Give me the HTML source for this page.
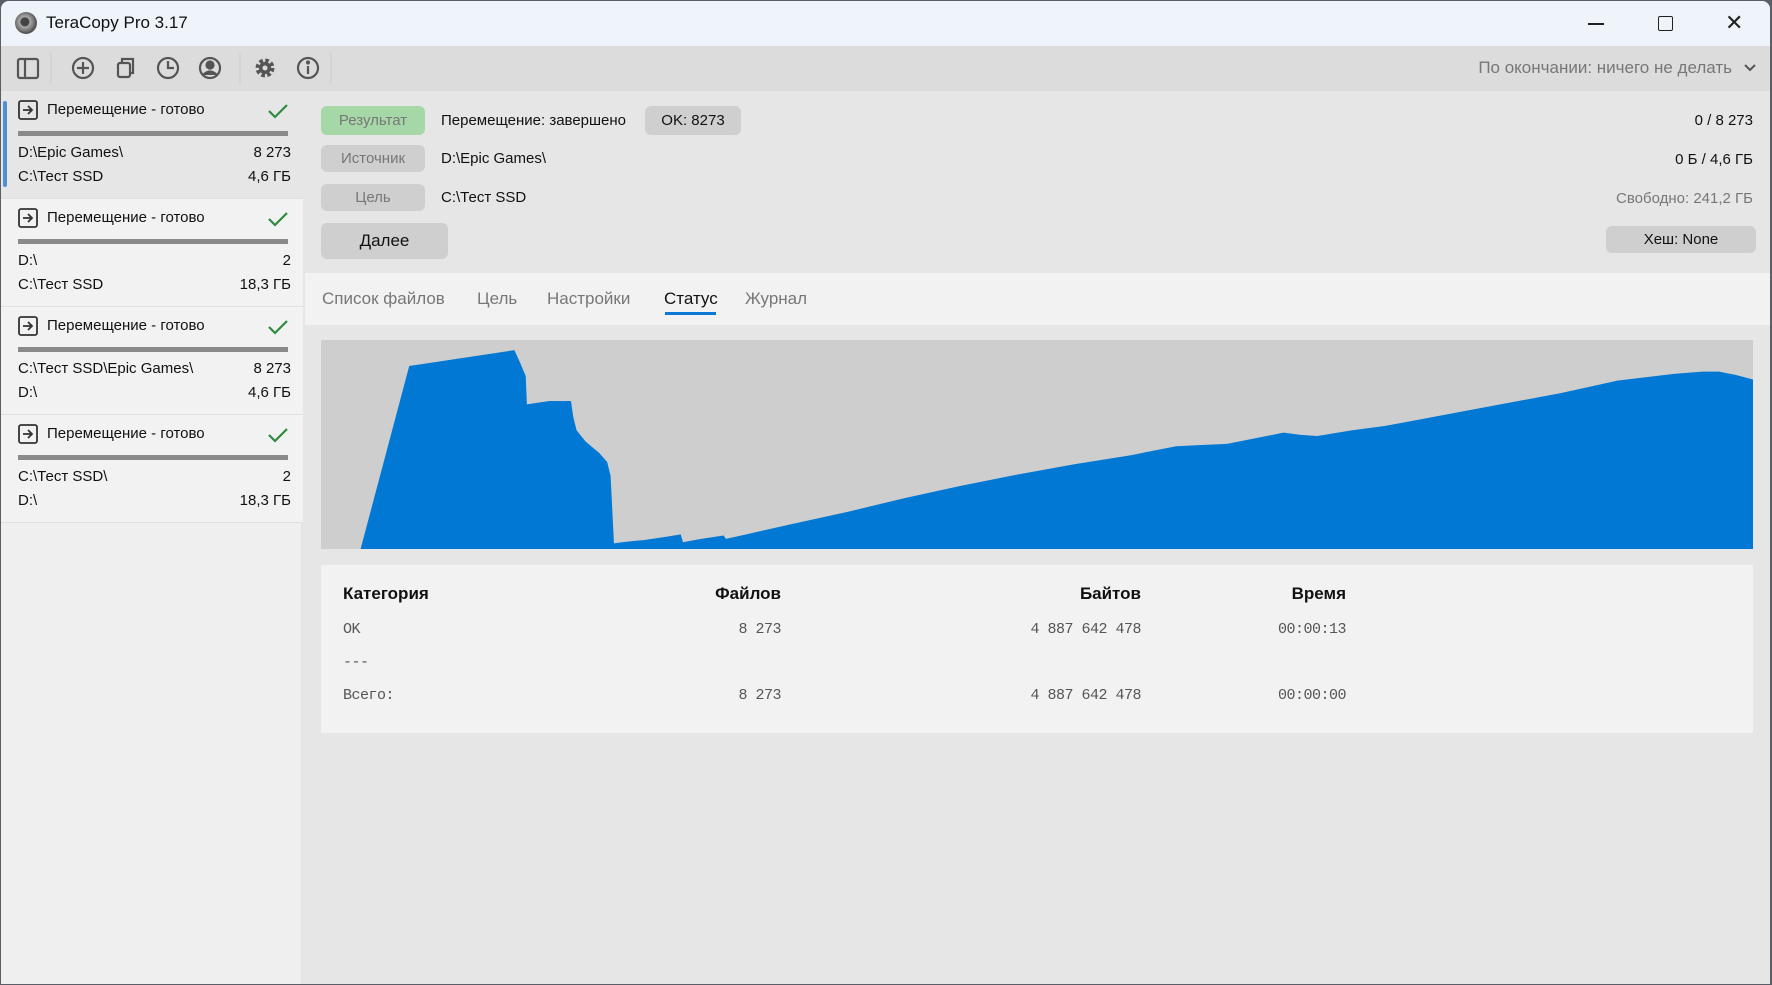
<!DOCTYPE html>
<html><head><meta charset="utf-8"><style>
*{box-sizing:border-box;margin:0;padding:0}
body{width:1772px;height:985px;overflow:hidden;background:#5a5f66;font-family:"Liberation Sans","Noto Sans CJK SC",sans-serif;position:relative}
.win{position:absolute;left:1px;top:1px;width:1769px;height:983px;background:#e6e6e6;border-radius:8px 8px 0 0;overflow:hidden}
.abs{position:absolute}
.title{left:0;top:0;width:100%;height:45px;background:#eff3fa}
.tb{left:0;top:45px;width:100%;height:45px;background:#dcdcdc}
.left{left:0;top:90px;width:302px;height:893px;background:#efefef;border-right:2px solid #e2e2e2}
.item{position:absolute;left:0;width:302px;height:108px;background:#f2f2f2;border-bottom:1px solid #e0e0e0;font-size:15px;color:#111}
.item.sel{background:#e6e6e6}
.item .bar{position:absolute;left:17px;top:19px;width:270px;height:5px;background:#8a8a8a}
.t{position:absolute;white-space:nowrap}
.btn{position:absolute;background:#cfcfcf;border-radius:6px;text-align:center;color:#777;font-size:15px}
.mono{font-family:"Liberation Mono",monospace;font-size:15px;color:#555;letter-spacing:-0.5px}
.chk{position:absolute;left:266px;top:12px}
</style></head><body>
<div class="win">
<div class="abs title">
 <div class="abs" style="left:14px;top:11px;width:22px;height:22px;border-radius:50%;background:radial-gradient(circle at 45% 45%,#444 0 4px,#aaa 5px,#777 9px,#555 11px)"></div>
 <div class="t" style="left:45px;top:12px;font-size:17px;color:#111">TeraCopy Pro 3.17</div>
 <div class="abs" style="left:1587px;top:22px;width:16px;height:1.5px;background:#222"></div>
 <div class="abs" style="left:1657px;top:15px;width:15px;height:15px;border:1.5px solid #222;border-radius:2px"></div>
 <div class="t" style="left:1724px;top:9px;font-size:22px;color:#222">✕</div>
</div>
<div class="abs tb">
 <svg class="abs" style="left:0;top:0" width="360" height="45" fill="none" stroke="#555" stroke-width="2.2">
  <rect x="17" y="13" width="20" height="19" rx="2"/><line x1="24" y1="13" x2="24" y2="32"/>
  <line x1="50" y1="7" x2="50" y2="38" stroke="#ccc" stroke-width="1"/>
  <circle cx="82" cy="22" r="10"/><line x1="82" y1="16" x2="82" y2="28"/><line x1="76" y1="22" x2="88" y2="22"/>
  <rect x="117" y="17" width="12" height="14" rx="2"/><path d="M121 17 V13 H132 V27 H129"/>
  <circle cx="167" cy="22" r="10"/><path d="M167 15 V22 H173"/>
  <circle cx="209" cy="22" r="10"/><circle cx="209" cy="19" r="3.5" fill="#555"/><path d="M202 29 Q209 22 216 29" fill="#555"/>
  <line x1="239" y1="7" x2="239" y2="38" stroke="#ccc" stroke-width="1"/>
  <circle cx="264" cy="22" r="7" stroke-width="5" stroke-dasharray="3.3 2.2"/><circle cx="264" cy="22" r="5" fill="#555"/><circle cx="264" cy="22" r="2.5" fill="#dcdcdc" stroke="none"/>
  <circle cx="307" cy="22" r="10"/><line x1="307" y1="20" x2="307" y2="28"/><circle cx="307" cy="16.5" r="1" fill="#555"/>
  <line x1="330" y1="7" x2="330" y2="38" stroke="#ccc" stroke-width="1"/>
 </svg>
 <div class="t" style="right:38px;top:12px;font-size:17px;color:#777">По окончании: ничего не делать</div>
 <svg class="abs" style="right:14px;top:17px" width="12" height="10" fill="none" stroke="#555" stroke-width="2"><path d="M1 2 L6 7 L11 2"/></svg>
</div>
<div class="abs left">
 <div class="abs" style="left:2px;top:10px;width:4px;height:86px;background:#4a90d9;border-radius:2px;z-index:2"></div>
 <div class="item sel" style="top:0">
  <svg class="abs" style="left:17px;top:9px" width="20" height="20" fill="none" stroke="#333" stroke-width="1.8"><rect x="1" y="1" width="18" height="18" rx="2"/><path d="M5 10 H14 M10 6 L14 10 L10 14"/></svg>
  <div class="t" style="left:46px;top:10px">Перемещение - готово</div>
  <svg class="chk" width="22" height="16" fill="none" stroke="#2e8b3e" stroke-width="2.2"><path d="M2 8 L8 14 L20 2"/></svg>
  <div class="bar" style="top:40px"></div>
  <div class="t" style="left:17px;top:53px">D:\Epic Games\</div><div class="t" style="right:12px;top:53px">8 273</div>
  <div class="t" style="left:17px;top:77px">C:\Тест SSD</div><div class="t" style="right:12px;top:77px">4,6 ГБ</div>
 </div>
 <div class="item" style="top:108px">
  <svg class="abs" style="left:17px;top:9px" width="20" height="20" fill="none" stroke="#333" stroke-width="1.8"><rect x="1" y="1" width="18" height="18" rx="2"/><path d="M5 10 H14 M10 6 L14 10 L10 14"/></svg>
  <div class="t" style="left:46px;top:10px">Перемещение - готово</div>
  <svg class="chk" width="22" height="16" fill="none" stroke="#2e8b3e" stroke-width="2.2"><path d="M2 8 L8 14 L20 2"/></svg>
  <div class="bar" style="top:40px"></div>
  <div class="t" style="left:17px;top:53px">D:\</div><div class="t" style="right:12px;top:53px">2</div>
  <div class="t" style="left:17px;top:77px">C:\Тест SSD</div><div class="t" style="right:12px;top:77px">18,3 ГБ</div>
 </div>
 <div class="item" style="top:216px">
  <svg class="abs" style="left:17px;top:9px" width="20" height="20" fill="none" stroke="#333" stroke-width="1.8"><rect x="1" y="1" width="18" height="18" rx="2"/><path d="M5 10 H14 M10 6 L14 10 L10 14"/></svg>
  <div class="t" style="left:46px;top:10px">Перемещение - готово</div>
  <svg class="chk" width="22" height="16" fill="none" stroke="#2e8b3e" stroke-width="2.2"><path d="M2 8 L8 14 L20 2"/></svg>
  <div class="bar" style="top:40px"></div>
  <div class="t" style="left:17px;top:53px">C:\Тест SSD\Epic Games\</div><div class="t" style="right:12px;top:53px">8 273</div>
  <div class="t" style="left:17px;top:77px">D:\</div><div class="t" style="right:12px;top:77px">4,6 ГБ</div>
 </div>
 <div class="item" style="top:324px">
  <svg class="abs" style="left:17px;top:9px" width="20" height="20" fill="none" stroke="#333" stroke-width="1.8"><rect x="1" y="1" width="18" height="18" rx="2"/><path d="M5 10 H14 M10 6 L14 10 L10 14"/></svg>
  <div class="t" style="left:46px;top:10px">Перемещение - готово</div>
  <svg class="chk" width="22" height="16" fill="none" stroke="#2e8b3e" stroke-width="2.2"><path d="M2 8 L8 14 L20 2"/></svg>
  <div class="bar" style="top:40px"></div>
  <div class="t" style="left:17px;top:53px">C:\Тест SSD\</div><div class="t" style="right:12px;top:53px">2</div>
  <div class="t" style="left:17px;top:77px">D:\</div><div class="t" style="right:12px;top:77px">18,3 ГБ</div>
 </div>
</div>
<div class="btn" style="left:320px;top:105px;width:104px;height:29px;line-height:29px;background:#a6d7a7">Результат</div>
<div class="btn" style="left:320px;top:144px;width:104px;height:27px;line-height:27px">Источник</div>
<div class="btn" style="left:320px;top:183px;width:104px;height:27px;line-height:27px">Цель</div>
<div class="btn" style="left:320px;top:222px;width:127px;height:36px;line-height:36px;color:#111;font-size:17px">Далее</div>
<div class="t" style="left:440px;top:111px;font-size:15px;color:#111">Перемещение: завершено</div>
<div class="btn" style="left:644px;top:105px;width:96px;height:29px;line-height:29px;color:#111">OK: 8273</div>
<div class="t" style="left:440px;top:149px;font-size:15px;color:#111">D:\Epic Games\</div>
<div class="t" style="left:440px;top:188px;font-size:15px;color:#111">C:\Тест SSD</div>
<div class="t" style="right:17px;top:111px;font-size:15px;color:#111">0 / 8 273</div>
<div class="t" style="right:17px;top:150px;font-size:15px;color:#111">0 Б / 4,6 ГБ</div>
<div class="t" style="right:17px;top:189px;font-size:15px;color:#777">Свободно: 241,2 ГБ</div>
<div class="btn" style="left:1605px;top:225px;width:150px;height:27px;line-height:27px;color:#111">Хеш: None</div>
<div class="abs" style="left:304px;top:272px;width:1465px;height:52px;background:#f2f2f2"></div>
<div class="t" style="left:321px;top:288px;font-size:17px;color:#777">Список файлов</div>
<div class="t" style="left:476px;top:288px;font-size:17px;color:#777">Цель</div>
<div class="t" style="left:546px;top:288px;font-size:17px;color:#777">Настройки</div>
<div class="t" style="left:663px;top:288px;font-size:17px;color:#111">Статус</div>
<div class="abs" style="left:664px;top:311px;width:51px;height:3px;background:#0a78d4"></div>
<div class="t" style="left:744px;top:288px;font-size:17px;color:#777">Журнал</div>
<svg class="abs" style="left:320px;top:339px" width="1432" height="209" viewBox="284 300 1266 185" preserveAspectRatio="none">
 <rect x="284" y="300" width="1266" height="185" fill="#cecece"/>
 <polygon fill="#0078d4" points="319,485 362,323 455,309 460,320 465,332 466,357 486,354 505,354 507,368 510,380 518,390 530,400 537,408 540,420 541,440 543,480 550,479 570,477 590,474 602,472 604,479 620,476 640,473 642,476 660,472 700,463 750,452 800,440 850,429 900,419 950,410 1000,402 1040,394 1060,393 1085,392 1110,387 1135,382 1150,384 1165,385 1195,380 1225,376 1300,362 1380,347 1430,336 1480,330 1505,328 1520,328 1535,331 1550,335 1550,485"/>
</svg>
<div class="abs" style="left:320px;top:564px;width:1432px;height:168px;background:#f2f2f2"></div>
<div class="t" style="left:342px;top:583px;font-size:17px;font-weight:bold;color:#111">Категория</div>
<div class="t" style="right:989px;top:583px;font-size:17px;font-weight:bold;color:#111">Файлов</div>
<div class="t" style="right:629px;top:583px;font-size:17px;font-weight:bold;color:#111">Байтов</div>
<div class="t" style="right:424px;top:583px;font-size:17px;font-weight:bold;color:#111">Время</div>
<div class="t mono" style="left:342px;top:620px">OK</div>
<div class="t mono" style="right:989px;top:620px">8 273</div>
<div class="t mono" style="right:629px;top:620px">4 887 642 478</div>
<div class="t mono" style="right:424px;top:620px">00:00:13</div>
<div class="t mono" style="left:342px;top:653px">---</div>
<div class="t mono" style="left:342px;top:686px">Всего:</div>
<div class="t mono" style="right:989px;top:686px">8 273</div>
<div class="t mono" style="right:629px;top:686px">4 887 642 478</div>
<div class="t mono" style="right:424px;top:686px">00:00:00</div>
</div>
</body></html>
